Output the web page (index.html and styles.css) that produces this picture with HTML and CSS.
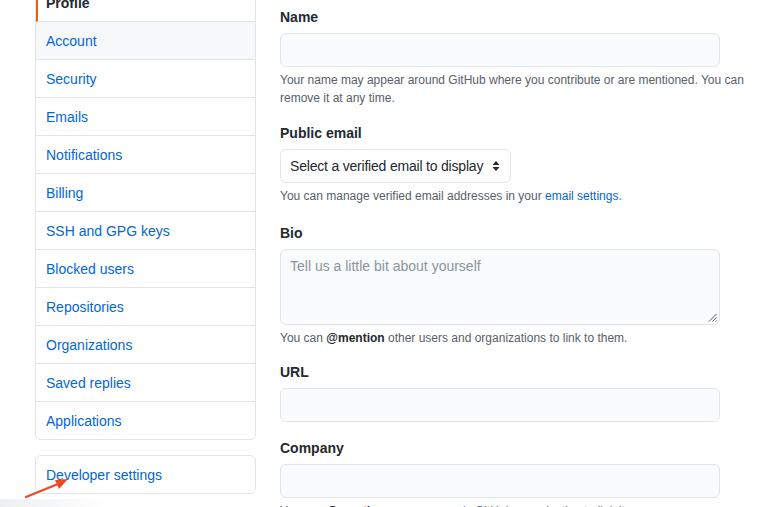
FILE: index.html
```html
<!DOCTYPE html>
<html>
<head>
<meta charset="utf-8">
<link rel="stylesheet" href="styles.css">
</head>
<body>
<div class="page">
  <aside class="sidebar">
    <nav class="menu">
      <a class="menu-item selected">Profile</a>
      <a class="menu-item hover">Account</a>
      <a class="menu-item">Security</a>
      <a class="menu-item">Emails</a>
      <a class="menu-item">Notifications</a>
      <a class="menu-item">Billing</a>
      <a class="menu-item">SSH and GPG keys</a>
      <a class="menu-item">Blocked users</a>
      <a class="menu-item">Repositories</a>
      <a class="menu-item">Organizations</a>
      <a class="menu-item">Saved replies</a>
      <a class="menu-item">Applications</a>
    </nav>
    <nav class="menu">
      <a class="menu-item">Developer settings</a>
    </nav>
  </aside>
  <main class="main">
    <div class="group group-name">
      <label class="label">Name</label>
      <div class="input"></div>
      <p class="note">Your name may appear around GitHub where you contribute or are mentioned. You can remove it at any time.</p>
    </div>
    <div class="group group-email">
      <label class="label">Public email</label>
      <div class="select"><span class="select-text">Select a verified email to display</span>
        <svg class="caret" width="8" height="12" viewBox="0 0 8 12"><path d="M4 1 L7.5 5 H0.5 Z M4 11 L7.5 7 H0.5 Z" fill="#24292e"/></svg>
      </div>
      <p class="note">You can manage verified email addresses in your <a class="link">email settings</a>.</p>
    </div>
    <div class="group">
      <label class="label">Bio</label>
      <div class="input textarea"><span class="placeholder">Tell us a little bit about yourself</span>
        <svg class="grip" width="9" height="9" viewBox="0 0 9 9"><path d="M8.5 1 L1 8.5 M8.5 4.5 L4.5 8.5 M8.5 7.5 L7.5 8.5" stroke="#555" stroke-width="1"/></svg>
      </div>
      <p class="note">You can <strong>@mention</strong> other users and organizations to link to them.</p>
    </div>
    <div class="group group-url">
      <label class="label">URL</label>
      <div class="input"></div>
    </div>
    <div class="group">
      <label class="label">Company</label>
      <div class="input"></div>
      <p class="note">You can <strong>@mention</strong> your company's GitHub organization to link it.</p>
    </div>
  </main>
</div>
<svg class="arrow" width="80" height="40" viewBox="0 0 80 40"><path d="M26 35 L58 22" stroke="#f2481f" stroke-width="2.2" stroke-linecap="round"/><path d="M68 17 L55 18 L59 27 Z" fill="#f2481f"/></svg>
<div class="shade"></div>
</body>
</html>
```
FILE: styles.css
```css
html, body {
  margin: 0;
  padding: 0;
  background: #fff;
  overflow: hidden;
}
body {
  font-family: "Liberation Sans", Arial, sans-serif;
  font-size: 14px;
  line-height: 1.5;
  color: #24292e;
  width: 767px;
  height: 507px;
  position: relative;
}
.page {
  display: flex;
  gap: 24px;
  margin-top: -17px;
  padding-left: 35px;
}
.sidebar {
  width: 221px;
  flex: none;
  display: flex;
  flex-direction: column;
  gap: 15px;
}
.menu {
  border: 1px solid #e1e4e8;
  border-radius: 6px;
  display: flex;
  flex-direction: column;
}
.menu-item {
  display: block;
  padding: 9px 10px 7px;
  line-height: 21px;
  color: #0366d6;
  border-bottom: 1px solid #e1e4e8;
}
.menu-item:last-child {
  border-bottom: none;
}
.menu-item.selected {
  color: #24292e;
  font-weight: bold;
  border-left: 2px solid #e36209;
  padding-left: 8px;
}
.menu-item.hover {
  background: #f6f8fa;
}
.main {
  flex: 1;
  padding-top: 24px;
}
.group {
  margin-bottom: 15px;
}
.group-name {
  margin-bottom: 16px;
}
.group-email {
  margin-bottom: 18px;
}
.group-url {
  margin-bottom: 16px;
}
.label {
  display: block;
  font-weight: bold;
  line-height: 21px;
  margin-bottom: 5px;
}
.input {
  width: 440px;
  height: 34px;
  box-sizing: border-box;
  background: #fafbfc;
  border: 1px solid #e1e4e8;
  border-radius: 6px;
}
.textarea {
  height: 76px;
  position: relative;
  padding: 6px 9px;
  line-height: 20px;
}
.placeholder {
  color: #8b949e;
}
.grip {
  position: absolute;
  right: 2px;
  bottom: 2px;
}
.select {
  width: 231px;
  height: 34px;
  box-sizing: border-box;
  border: 1px solid #e1e4e8;
  border-radius: 6px;
  background: #fff;
  padding: 0 10px 0 9px;
  display: flex;
  align-items: center;
  justify-content: space-between;
  white-space: nowrap;
}
.select-text {
  letter-spacing: -0.2px;
}
.note {
  margin: 4px 0 0;
  font-size: 12px;
  line-height: 18px;
  color: #586069;
}
.note strong {
  color: #24292e;
}
.link {
  color: #0366d6;
}
.arrow {
  position: absolute;
  left: 0;
  top: 462px;
}
.shade {
  position: absolute;
  left: 0;
  top: 499px;
  width: 110px;
  height: 8px;
  background: linear-gradient(to right, rgba(230,232,236,0.7), rgba(240,241,243,0));
}
```
